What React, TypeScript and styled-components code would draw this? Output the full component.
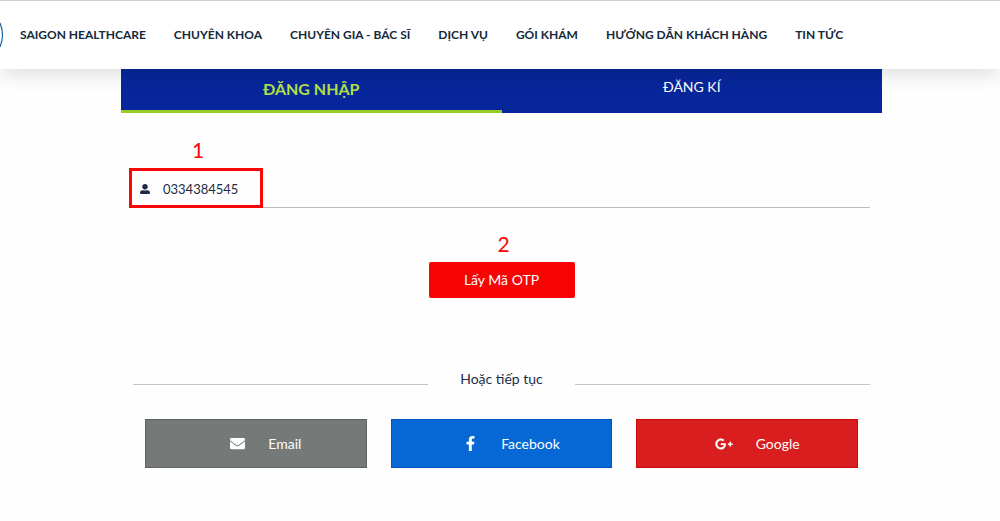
import React from "react";
import styled, { createGlobalStyle, css } from "styled-components";
import { FaEnvelope, FaFacebookF, FaGooglePlusG, FaUserAlt } from "react-icons/fa";

const GlobalStyle = createGlobalStyle`
  *, *::before, *::after { box-sizing: border-box; }
  body {
    margin: 0;
    background: #fefefe;
    color: #1d2b45;
    font-family: Lato, "Noto Sans", sans-serif;
    font-size: 14px;
    line-height: 20px;
    overflow-x: hidden;
  }
  button, input { font: inherit; color: inherit; }
`;

const Header = styled.header`
  position: relative;
  z-index: 1;
  display: flex;
  align-items: center;
  gap: 16px;
  height: 69px;
  border-top: 1px solid #d2d2d2;
  background: #fff;
  box-shadow: 0 4px 20px rgba(0, 0, 0, 0.14);
`;

const Logo = styled.svg`
  flex: none;
  width: 4px;
  height: 28px;
`;

const Nav = styled.nav`
  display: flex;
  gap: 28px;
`;

const NavLink = styled.a`
  color: #14293a;
  font-size: 12px;
  font-weight: 700;
  text-decoration: none;
  white-space: nowrap;
`;

const Main = styled.main`
  padding: 0 118px 0 121px;
`;

const Tabs = styled.div`
  display: grid;
  grid-template-columns: 1fr 1fr;
  height: 44px;
  background: #07269b;
`;

const Tab = styled.button<{ $active?: boolean }>`
  border: 0;
  border-bottom: 3px solid transparent;
  padding: 0 0 6px;
  background: none;
  color: #fff;
  cursor: pointer;
  ${({ $active }) =>
    $active &&
    css`
      border-color: #98cb24;
      padding: 0 0 2px;
      color: #b1e045;
      font-size: 16px;
      font-weight: 700;
    `}
`;

const Form = styled.form`
  display: flex;
  flex-direction: column;
  align-items: center;
  padding: 58px 12px 0;
`;

const PhoneField = styled.label`
  position: relative;
  display: flex;
  align-items: center;
  gap: 13px;
  width: 100%;
  height: 37px;
  border-bottom: 1px solid #bdbdbd;
  padding-left: 7px;
  font-size: 10px;
`;

const PhoneInput = styled.input`
  flex: 1;
  border: 0;
  padding: 0;
  background: none;
  font-size: 13px;
  outline: 0;
`;

const Highlight = styled.span`
  position: absolute;
  top: -3px;
  left: -4px;
  width: 134px;
  height: 40px;
  box-shadow: inset 0 0 0 3px #fb0505;
  pointer-events: none;
`;

const StepNumber = styled.span`
  position: absolute;
  right: 0;
  bottom: 100%;
  left: 4px;
  padding-bottom: 8px;
  color: #fb0505;
  font-size: 21px;
  line-height: 20px;
  text-align: center;
`;

const OtpButton = styled.button`
  position: relative;
  width: 146px;
  height: 36px;
  margin-top: 54px;
  border: 0;
  border-radius: 2px;
  background: #f70505;
  color: #fff;
  cursor: pointer;
`;

const Divider = styled.div`
  display: grid;
  grid-template-columns: 2fr 1fr 2fr;
  align-items: center;
  width: 100%;
  margin-top: 71px;
  text-align: center;
`;

const Rule = styled.hr`
  width: 100%;
  margin: 11px 0 0;
  border: 0;
  border-top: 1px solid #c6c6c6;
`;

const Socials = styled.div`
  display: grid;
  grid-template-columns: repeat(3, 1fr);
  gap: 24px;
  width: 100%;
  margin-top: 30px;
  padding: 0 12px;
`;

const SocialButton = styled.button<{ $color: string; $edge: string }>`
  display: flex;
  align-items: center;
  justify-content: center;
  height: 49px;
  border: 1px solid ${({ $edge }) => $edge};
  padding: 0;
  background: ${({ $color }) => $color};
  color: #fff;
  cursor: pointer;

  svg {
    margin: 0 23px 0 20px;
  }
`;

const links = [
  "SAIGON HEALTHCARE",
  "CHUYÊN KHOA",
  "CHUYÊN GIA - BÁC SĨ",
  "DỊCH VỤ",
  "GÓI KHÁM",
  "HƯỚNG DẪN KHÁCH HÀNG",
  "TIN TỨC",
];

export default function App() {
  return (
    <>
      <GlobalStyle />
      <Header>
        <Logo viewBox="0 0 4 28" aria-hidden="true">
          <path d="M0 2Q5 14 0 26" fill="none" stroke="#155fa8" strokeWidth="1.2" />
        </Logo>
        <Nav>
          {links.map((link) => (
            <NavLink href="#" key={link}>{link}</NavLink>
          ))}
        </Nav>
      </Header>
      <Main>
        <Tabs>
          <Tab type="button" $active>ĐĂNG NHẬP</Tab>
          <Tab type="button">ĐĂNG KÍ</Tab>
        </Tabs>
        <Form>
          <PhoneField>
            <FaUserAlt />
            <PhoneInput type="tel" aria-label="Phone" defaultValue="0334384545" />
            <Highlight>
              <StepNumber>1</StepNumber>
            </Highlight>
          </PhoneField>
          <OtpButton type="button">
            <StepNumber>2</StepNumber>
            Lấy Mã OTP
          </OtpButton>
          <Divider>
            <Rule />
            <span>Hoặc tiếp tục</span>
            <Rule />
          </Divider>
          <Socials>
            <SocialButton type="button" $color="#757978" $edge="#5f6362">
              <FaEnvelope size={15} />
              Email
            </SocialButton>
            <SocialButton type="button" $color="#0568d4" $edge="#0550c4">
              <FaFacebookF size={15} />
              Facebook
            </SocialButton>
            <SocialButton type="button" $color="#d81e1e" $edge="#d00808">
              <FaGooglePlusG size={18} />
              Google
            </SocialButton>
          </Socials>
        </Form>
      </Main>
    </>
  );
}
